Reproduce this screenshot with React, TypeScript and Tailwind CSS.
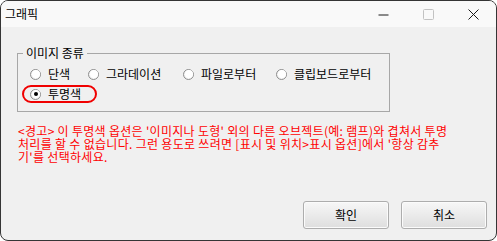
import React from "react";

const font = { fontFamily: '"Noto Sans CJK KR", "Noto Sans", sans-serif' };

function Radio({ checked }: { checked?: boolean }) {
  return (
    <span className="relative flex h-[11px] w-[11px] shrink-0 items-center justify-center rounded-full border border-[#8e8e8e] bg-gradient-to-br from-[#dcdcdc] to-white shadow-[inset_0_0_0_1px_#f4f4f4]">
      <span className="h-[8px] w-[8px] rounded-full bg-white" />
      {checked && <span className="absolute h-[4px] w-[4px] rounded-full bg-black" />}
    </span>
  );
}

function Option({ label, checked, width }: { label: string; checked?: boolean; width?: string }) {
  return (
    <div className={`flex items-center gap-[7px] ${width ?? ""}`}>
      <Radio checked={checked} />
      <span className="whitespace-nowrap text-[12px] leading-[14px] text-black">{label}</span>
    </div>
  );
}

function DlgButton({ label }: { label: string }) {
  return (
    <button className="flex h-[28px] w-[86px] items-center justify-center rounded-[3px] border border-[#adadad] bg-gradient-to-b from-[#f7f7f7] to-[#dedede] text-[12px] text-black shadow-[inset_0_0_0_1px_#fbfbfb]">
      {label}
    </button>
  );
}

export default function App() {
  return (
    <div
      className="flex h-[241px] w-[497px] flex-col overflow-hidden rounded-[8px] border border-[#353535] bg-[#f0f0f0]"
      style={font}
    >
      {/* title bar */}
      <div className="flex h-[26px] shrink-0 items-center bg-[#f9f9f9] pl-[4px]">
        <span className="text-[12px] text-black">그래픽</span>
        <div className="ml-auto flex h-full">
          <div className="flex w-[45px] items-center justify-center">
            <svg width="11" height="11" viewBox="0 0 11 11">
              <line x1="0.5" y1="6" x2="10.5" y2="6" stroke="#1a1a1a" strokeWidth="1" />
            </svg>
          </div>
          <div className="flex w-[45px] items-center justify-center">
            <svg width="11" height="11" viewBox="0 0 11 11">
              <rect x="0.5" y="0.5" width="10" height="10" rx="1" fill="none" stroke="#c2c2c2" />
            </svg>
          </div>
          <div className="flex w-[45px] items-center justify-center">
            <svg width="11" height="11" viewBox="0 0 11 11">
              <path d="M0.5 0.5 L10.5 10.5 M10.5 0.5 L0.5 10.5" stroke="#1a1a1a" strokeWidth="1" />
            </svg>
          </div>
        </div>
      </div>

      {/* body */}
      <div className="flex flex-1 flex-col">
        <fieldset className="ml-[16px] mt-[19px] h-[66px] w-[373px] border border-[#a7a7a7] pl-[4px]">
          <legend className="ml-[1px] px-[3px] text-[12px] leading-[14px] text-black">이미지 종류</legend>
          <div className="mt-[7px] flex h-[14px] items-center pl-[8px]">
            <Option label="단색" width="w-[58px]" />
            <Option label="그라데이션" width="w-[95px]" />
            <Option label="파일로부터" width="w-[93px]" />
            <Option label="클립보드로부터" />
          </div>
          <div className="mt-[4px] flex h-[18px] w-[75px] items-center rounded-[9px] border-2 border-[#f00000] pl-[6px]">
            <Option label="투명색" checked />
          </div>
        </fieldset>

        <div className="mt-[12px] pl-[17px] text-[12px] leading-[13px] tracking-[0.3px] text-[#ff0000] whitespace-pre">
          <div>{"<경고> 이 투명색 옵션은 '이미지나 도형' 외의 다른 오브젝트(예: 램프)와 겹쳐서 투명"}</div>
          <div>{"처리를 할 수 없습니다. 그런 용도로 쓰려면 [표시 및 위치>표시 옵션]에서 '항상 감추"}</div>
          <div>{"기'를 선택하세요."}</div>
        </div>

        <div className="mt-auto flex justify-end gap-[12px] pb-[11px] pr-[9px]">
          <DlgButton label="확인" />
          <DlgButton label="취소" />
        </div>
      </div>
    </div>
  );
}
